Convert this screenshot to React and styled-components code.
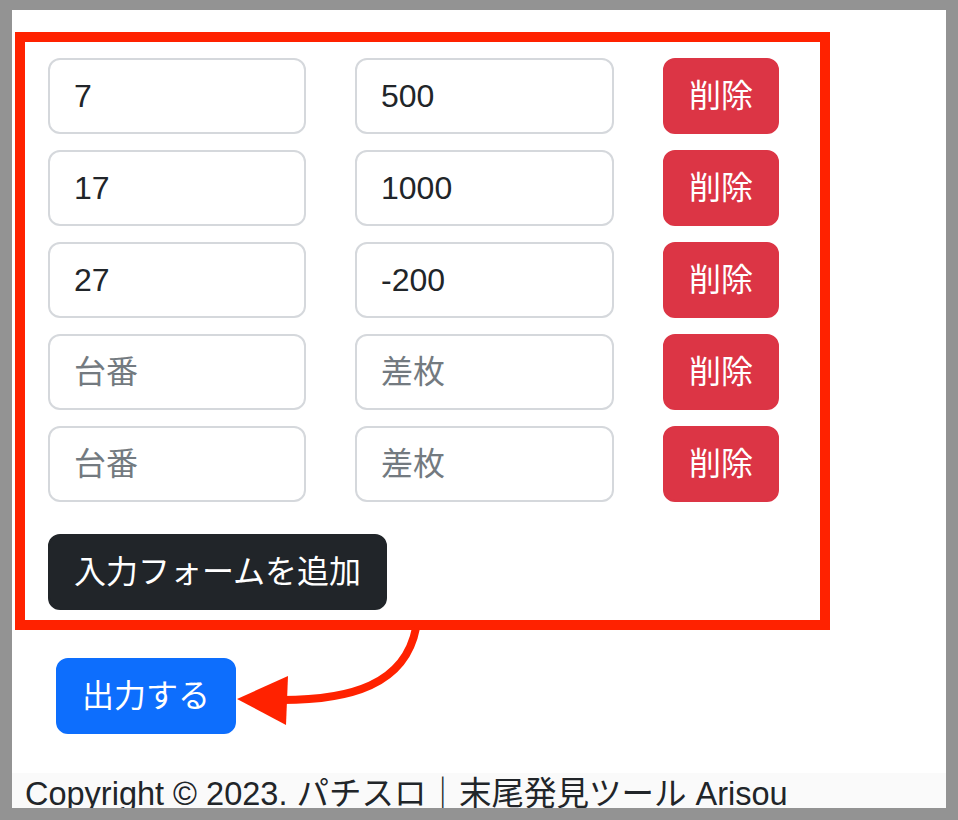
import React from "react";
import styled, { createGlobalStyle } from "styled-components";

const GlobalStyle = createGlobalStyle`
  html, body {
    margin: 0;
    padding: 0;
    background: #ffffff;
  }
  body {
    font-family: "Liberation Sans", "Noto Sans CJK JP", sans-serif;
    color: #212529;
  }
`;

const Frame = styled.div`
  position: relative;
  box-sizing: border-box;
  width: 958px;
  height: 820px;
  border: 12px solid #939393;
  border-top-width: 10px;
  overflow: hidden;
  background: #ffffff;
  display: flex;
  flex-direction: column;
`;

const FormBox = styled.div`
  box-sizing: border-box;
  width: 815px;
  margin: 22px 0 0 3px;
  padding: 16px 23px 10px;
  border: 10px solid #ff2200;
`;

const Grid = styled.div`
  display: grid;
  grid-template-columns: 258px 259px 116px;
  column-gap: 49px;
  row-gap: 16px;
`;

const Input = styled.input`
  box-sizing: border-box;
  width: 100%;
  height: 76px;
  padding: 12px 24px;
  border: 2px solid #d5d8dc;
  border-radius: 12px;
  font-family: inherit;
  font-size: 32px;
  color: #212529;
  background: #ffffff;
  outline: none;

  &::placeholder {
    color: #737a80;
  }
`;

const Button = styled.button`
  box-sizing: border-box;
  height: 76px;
  padding: 12px 24px;
  border: 2px solid ${p => p.$bg};
  border-radius: 12px;
  background: ${p => p.$bg};
  color: #ffffff;
  font-family: inherit;
  font-size: 32px;
  line-height: 48px;
  white-space: nowrap;
  cursor: pointer;
`;

const AddRow = styled.div`
  margin-top: 32px;
`;

const OutputRow = styled.div`
  margin: 28px 0 0 44px;
`;

const Footer = styled.footer`
  margin-top: 39px;
  padding: 0 0 0 13px;
  background: #fafafa;
  font-size: 32.5px;
  line-height: 42px;
  white-space: nowrap;
  color: #212529;
`;

const Arrow = styled.svg`
  position: absolute;
  left: -12px;
  top: -10px;
  pointer-events: none;
`;

const rows = [
  ["7", "500"],
  ["17", "1000"],
  ["27", "-200"],
  ["", ""],
  ["", ""],
];

export default function App() {
  return (
    <>
      <GlobalStyle />
      <Frame>
        <FormBox>
          <Grid>
            {rows.map(([no, diff], i) => (
              <React.Fragment key={i}>
                <Input defaultValue={no} placeholder="台番" />
                <Input defaultValue={diff} placeholder="差枚" />
                <Button $bg="#dc3545">削除</Button>
              </React.Fragment>
            ))}
          </Grid>
          <AddRow>
            <Button $bg="#212529">入力フォームを追加</Button>
          </AddRow>
        </FormBox>
        <OutputRow>
          <Button $bg="#0d6efd">出力する</Button>
        </OutputRow>
        <Footer>Copyright © 2023. パチスロ｜末尾発見ツール Arisou</Footer>
        <Arrow width="958" height="820" viewBox="0 0 958 820">
          <path
            d="M416 628 C 405 685, 350 700, 282 700"
            fill="none"
            stroke="#ff2200"
            strokeWidth="8"
          />
          <polygon points="237,699 288,676 286,725" fill="#ff2200" />
        </Arrow>
      </Frame>
    </>
  );
}
